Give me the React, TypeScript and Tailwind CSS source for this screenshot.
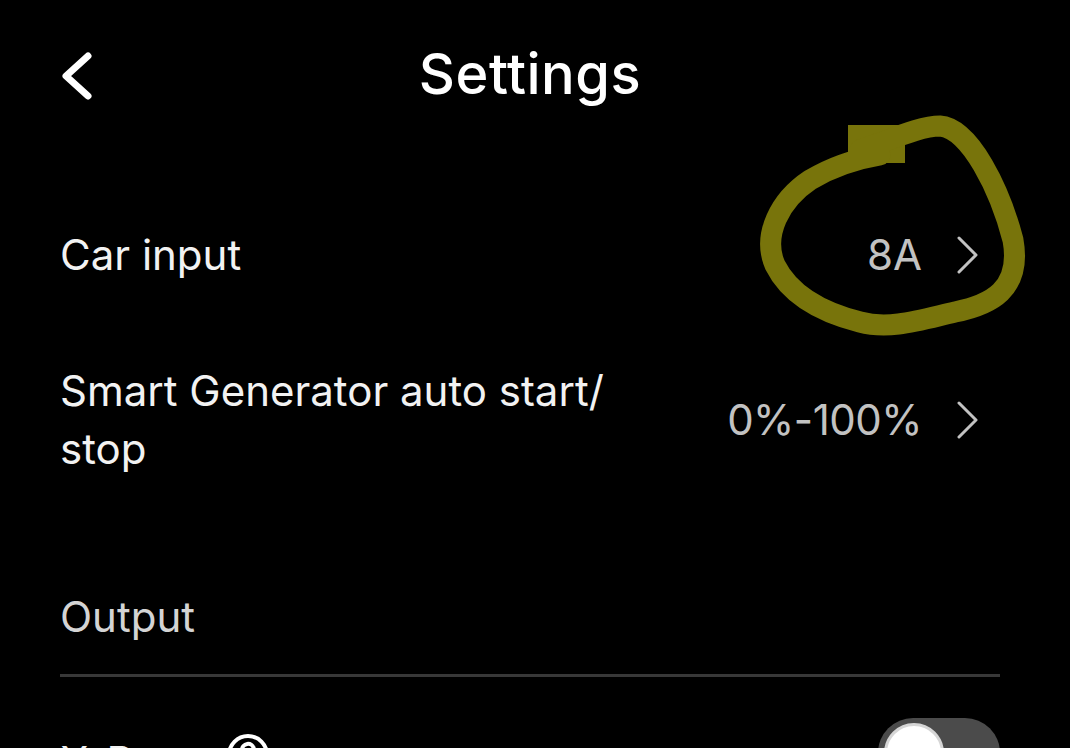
import React from "react";

function Chevron({ className }: { className?: string }) {
  return (
    <svg width="24" height="38" viewBox="0 0 24 38" className={className}>
      <path d="M3 2 L20 19 L3 36" fill="none" stroke="currentColor" strokeWidth="3" strokeLinecap="round" strokeLinejoin="round" />
    </svg>
  );
}

export default function App() {
  return (
    <div
      className="relative w-[1070px] h-[748px] overflow-hidden bg-black text-[#f2f2f2]"
      style={{ fontFamily: "Inter, 'Noto Sans', sans-serif" }}
    >
      {/* header */}
      <div className="h-[150px] pl-[56px] pr-[66px] grid grid-cols-[1fr_auto_1fr] items-center">
        <svg width="40" height="50" viewBox="0 0 40 50" className="text-white">
          <path d="M32 6 L10 26 L32 46" fill="none" stroke="currentColor" strokeWidth="7" strokeLinecap="round" strokeLinejoin="round" />
        </svg>
        <div className="text-[56px] font-medium text-white tracking-[0.5px] leading-none -mt-[2px]">Settings</div>
        <div />
      </div>

      <div className="pl-[60px] pr-[70px] flex flex-col">
        {/* Car input */}
        <div className="h-[210px] flex items-center justify-between">
          <div className="text-[42px] leading-[58px]">Car input</div>
          <div className="flex items-center gap-[34px] pr-[20px] text-[#c2c2c2]">
            <span className="text-[42px] leading-[58px]">8A</span>
            <Chevron />
          </div>
        </div>

        {/* Smart generator */}
        <div className="h-[120px] flex items-center justify-between">
          <div className="text-[42px] leading-[58px] w-[600px]">
            Smart Generator auto start/
            <br />
            stop
          </div>
          <div className="flex items-center gap-[34px] pr-[20px] text-[#c2c2c2]">
            <span className="text-[42px] leading-[58px] tracking-[-0.5px]">0%-100%</span>
            <Chevron />
          </div>
        </div>

        {/* Output */}
        <div className="mt-[108px] text-[42px] leading-[58px] text-[#d4d4d4]">Output</div>
        <div className="mt-[28px] h-[3px] bg-[#383838]" />

        {/* X-Boost */}
        <div className="mt-[41px] h-[70px] flex items-center justify-between">
          <div className="flex items-center gap-[6px]">
            <span className="text-[42px] leading-[58px] mt-[18px]">X-Boost</span>
            <svg width="44" height="44" viewBox="0 0 44 44" className="text-white mt-[4px]">
              <circle cx="22" cy="22" r="19" fill="none" stroke="currentColor" strokeWidth="4" />
              <path d="M16 17 a6 6 0 1 1 8 5.5 c-1.5 0.7 -2 1.5 -2 3.5" fill="none" stroke="currentColor" strokeWidth="4" strokeLinecap="round" />
              <circle cx="22" cy="32" r="2.4" fill="currentColor" />
            </svg>
          </div>
          <div className="w-[122px] h-[70px] rounded-full bg-[#4b4b4b] flex items-center pl-[6px]">
            <div className="w-[60px] h-[60px] rounded-full bg-white border-[3px] border-[#d6d6d6]" />
          </div>
        </div>
      </div>

      {/* hand-drawn annotation */}
      <svg
        width="1070"
        height="748"
        viewBox="0 0 1070 748"
        className="absolute top-0 left-0 pointer-events-none"
      >
        <rect x="848" y="125" width="57" height="38" fill="#78740b" />
        <path
          d="M860 150 C890 140 920 126 940 126 C970 128 1000 190 1013 240 C1022 290 990 305 955 312 C920 320 890 330 860 322 C820 312 790 295 775 265 C762 235 780 200 810 180 C830 168 850 160 880 155"
          fill="none"
          stroke="#78740b"
          strokeWidth="21"
          strokeLinecap="round"
          strokeLinejoin="round"
        />
      </svg>
    </div>
  );
}
